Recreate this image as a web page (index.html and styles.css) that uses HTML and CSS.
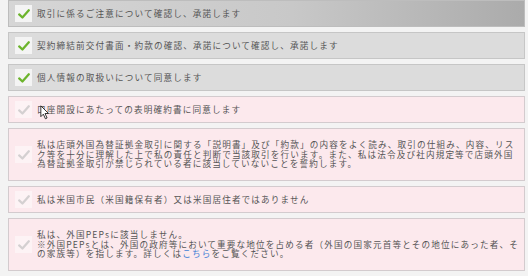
FILE: index.html
```html
<!DOCTYPE html>
<html lang="ja">
  <head>
    <meta charset="UTF-8">
    <title>同意事項</title>
    <link rel="stylesheet" href="styles.css">
  </head>
  <body>
    <section class="agree-list">

      <div class="agree-row checked first">
        <span class="box"><svg viewBox="0 0 16 16"><path d="M2.5 8.5 L6.2 12 L13.5 3.8" /></svg></span>
        <p>取引に係るご注意について確認し、承諾します</p>
      </div>

      <div class="agree-row checked">
        <span class="box"><svg viewBox="0 0 16 16"><path d="M2.5 8.5 L6.2 12 L13.5 3.8" /></svg></span>
        <p>契約締結前交付書面・約款の確認、承諾について確認し、承諾します</p>
      </div>

      <div class="agree-row checked">
        <span class="box"><svg viewBox="0 0 16 16"><path d="M2.5 8.5 L6.2 12 L13.5 3.8" /></svg></span>
        <p>個人情報の取扱いについて同意します</p>
      </div>

      <div class="agree-row pending">
        <span class="box"><svg viewBox="0 0 16 16"><path d="M2.5 8.5 L6.2 12 L13.5 3.8" /></svg></span>
        <p>口座開設にあたっての表明確約書に同意します</p>
        <svg class="cursor" viewBox="0 0 12 18"><path d="M1 1 L1 14 L4 11 L6.5 16.5 L8.5 15.6 L6 10.2 L10.2 10.2 Z" /></svg>
      </div>

      <div class="agree-row pending tall">
        <span class="box"><svg viewBox="0 0 16 16"><path d="M2.5 8.5 L6.2 12 L13.5 3.8" /></svg></span>
        <p>私は店頭外国為替証拠金取引に関する「説明書」及び「約款」の内容をよく読み、取引の仕組み、内容、リス<br>ク等を十分に理解した上で私の責任と判断で当該取引を行います。また、私は法令及び社内規定等で店頭外国<br>為替証拠金取引が禁じられている者に該当していないことを誓約します。</p>
      </div>

      <div class="agree-row pending">
        <span class="box"><svg viewBox="0 0 16 16"><path d="M2.5 8.5 L6.2 12 L13.5 3.8" /></svg></span>
        <p>私は米国市民（米国籍保有者）又は米国居住者ではありません</p>
      </div>

      <div class="agree-row pending tall">
        <span class="box"><svg viewBox="0 0 16 16"><path d="M2.5 8.5 L6.2 12 L13.5 3.8" /></svg></span>
        <p>私は、外国PEPsに該当しません。<br>※外国PEPsとは、外国の政府等において重要な地位を占める者（外国の国家元首等とその地位にあった者、そ<br>の家族等）を指します。詳しくは<a href="#">こちら</a>をご覧ください。</p>
      </div>

    </section>
  </body>
</html>
```

FILE: styles.css
```css
html, body{
    margin:0;
    padding:0;
}
body{
    background-color:#f3f3f3;
    font-family:"Noto Sans CJK JP", "Noto Sans", sans-serif;
    color:#555555;
    width:528px;
    height:276px;
    overflow:hidden;
}
.agree-list{
    display:flex;
    flex-direction:column;
    gap:5px;
    padding:0 3px 0 8px;
}
.agree-row{
    position:relative;
    display:flex;
    align-items:center;
    gap:5px;
    height:27px;
    box-sizing:border-box;
    padding:0 6px;
    border:1px solid #c6c6c6;
}
.agree-row.tall{
    height:53px;
}
.agree-row.checked{
    background-color:#dcdcdc;
}
.agree-row.first{
    background:linear-gradient(to right, #d6d6d6 0%, #c8c8c8 55%, #ababab 100%);
    border-color:#bdbdbd;
}
.agree-row.pending{
    background-color:#fce9ed;
    border-color:#d3cbce;
}
.agree-row p{
    margin:0;
    font-size:8.6px;
    letter-spacing:1.15px;
    line-height:9.8px;
    white-space:nowrap;
}
.agree-row a{
    color:#3f7fd6;
    text-decoration:none;
}
.box{
    flex:none;
    width:17px;
    height:17px;
    background-color:#f4f4f4;
    display:flex;
    align-items:center;
    justify-content:center;
}
.pending .box{
    background-color:#fdf3f5;
}
.box svg{
    width:14px;
    height:14px;
}
.box path{
    fill:none;
    stroke-width:2.6;
    stroke-linecap:round;
    stroke-linejoin:round;
}
.checked .box path{
    stroke:#6cb42c;
}
.pending .box path{
    stroke:#d4d0d1;
}
.cursor{
    position:absolute;
    left:31px;
    top:8px;
    width:10px;
    height:15px;
}
.cursor path{
    fill:#ffffff;
    stroke:#222222;
    stroke-width:1.1;
    stroke-linejoin:round;
}
```
